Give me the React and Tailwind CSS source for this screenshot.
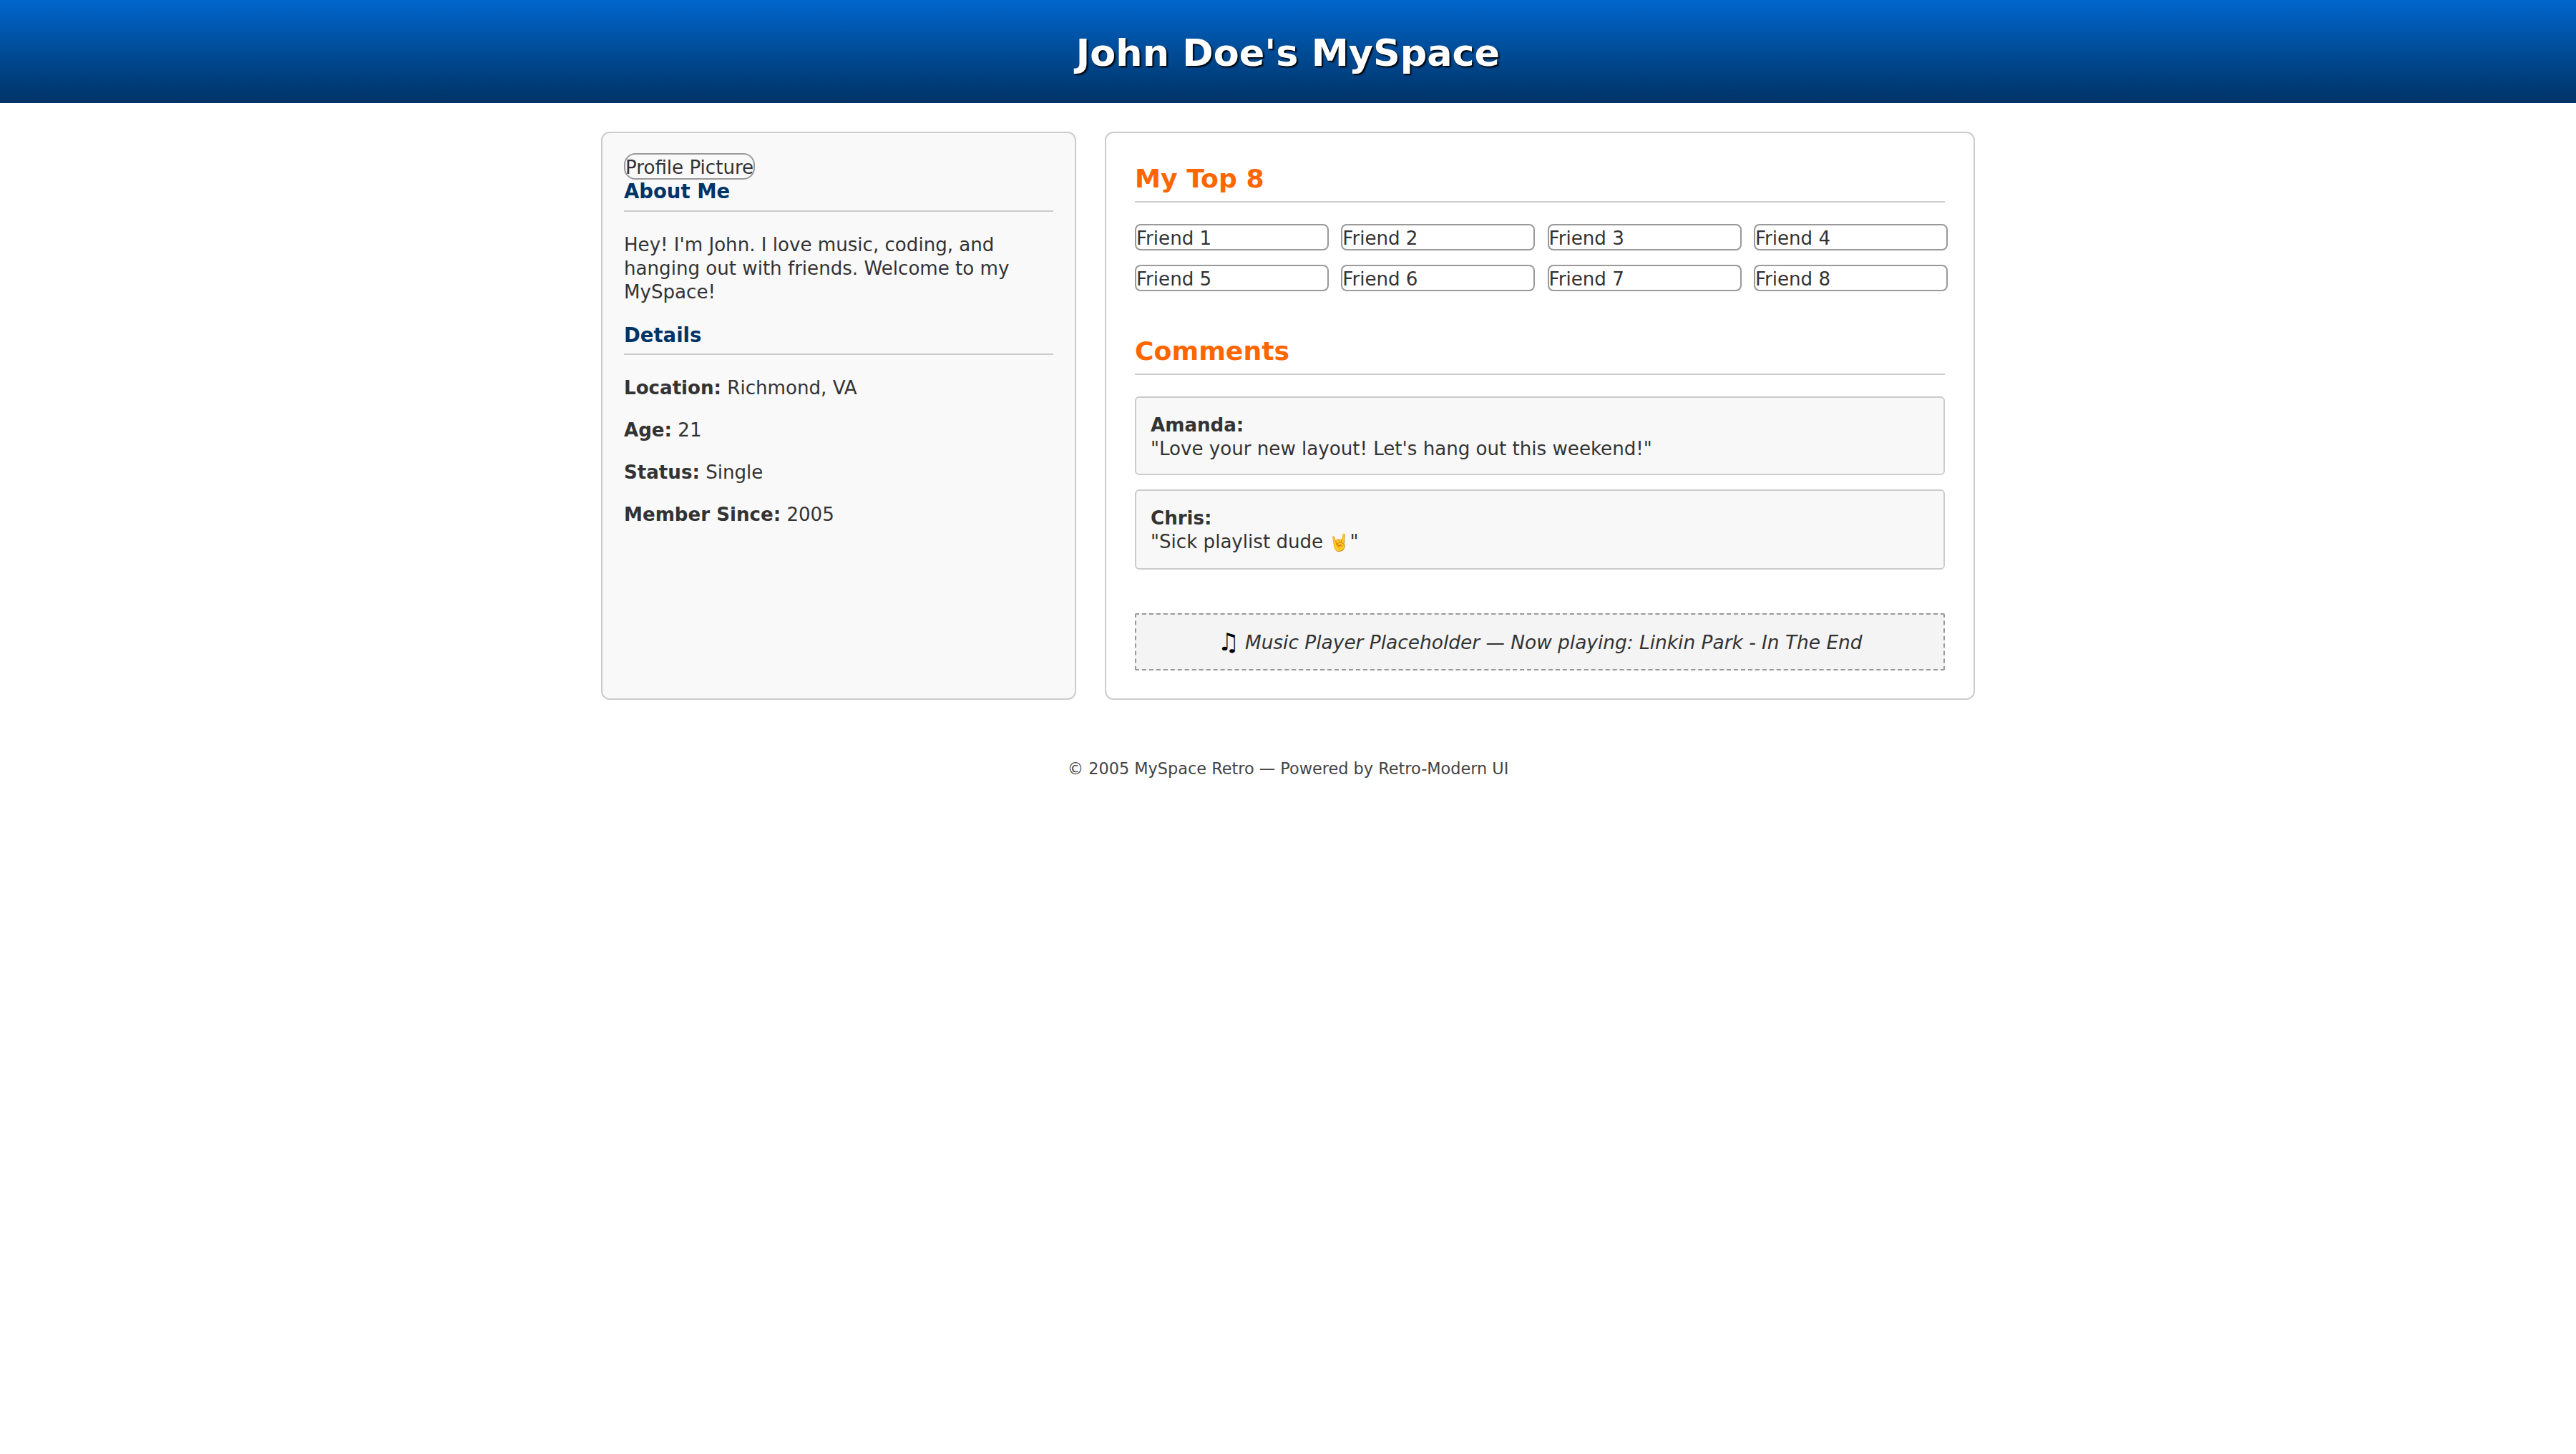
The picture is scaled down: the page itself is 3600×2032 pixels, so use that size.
const friends = ['Friend 1', 'Friend 2', 'Friend 3', 'Friend 4', 'Friend 5', 'Friend 6', 'Friend 7', 'Friend 8'];

const details = [
  ['Location:', 'Richmond, VA'],
  ['Age:', '21'],
  ['Status:', 'Single'],
  ['Member Since:', '2005'],
];

const App = () => {
  return (
    <div className="min-h-screen bg-white text-[26.1px] leading-[33px] text-[#333333] font-['DejaVu_Sans',sans-serif]">
      <header className="h-[144px] pt-[2px] bg-gradient-to-b from-[#0066cc] to-[#003366] flex items-center justify-center">
        <h1 className="text-[52.4px] font-bold text-white [text-shadow:2px_2px_2px_#000]">John Doe's MySpace</h1>
      </header>

      <main className="w-[1920px] mx-auto mt-[40px] flex gap-[40px]">
        <aside className="w-[664px] h-[794px] shrink-0 bg-[#f9f9f9] border-2 border-[#cccccc] rounded-[12px] px-[30px] pt-[28px]">
          <button className="block h-[37px] pt-[2px] border-2 border-[#999999] rounded-[16px] text-[#333333]">Profile Picture</button>
          <h2 className="text-[27.5px] font-bold text-[#003366] border-b-2 border-[#cccccc] pb-[10px] leading-[33px]">About Me</h2>
          <p className="mt-[30px]">Hey! I'm John. I love music, coding, and hanging out with friends. Welcome to my MySpace!</p>
          <h2 className="mt-[27px] text-[27.5px] font-bold text-[#003366] border-b-2 border-[#cccccc] pb-[9px] leading-[33px]">Details</h2>
          <div className="mt-[30px] flex flex-col gap-[26px]">
            {details.map(([label, value]) => (
              <p key={label}><b>{label}</b> {value}</p>
            ))}
          </div>
        </aside>

        <section className="w-[1216px] h-[794px] shrink-0 bg-white border-2 border-[#cccccc] rounded-[12px] px-[40px] pt-[42px]">
          <h2 className="text-[36.2px] leading-[43px] font-bold text-[#ff6600] border-b-2 border-[#cccccc] pb-[10px]">My Top 8</h2>
          <div className="mt-[30px] grid grid-cols-[repeat(4,271px)] gap-x-[17.3px] gap-y-[20px]">
            {friends.map((name) => (
              <button key={name} className="h-[37px] pt-[2px] text-left border-2 border-[#999999] rounded-[8px] text-[#333333]">{name}</button>
            ))}
          </div>
          <h2 className="mt-[62px] text-[36.2px] leading-[43px] font-bold text-[#ff6600] border-b-2 border-[#cccccc] pb-[10px]">Comments</h2>
          <div className="mt-[30px] bg-[#f8f8f8] border-2 border-[#cccccc] rounded-[6px] px-[20px] pt-[22px] pb-[18px]">
            <b>Amanda:</b><br />"Love your new layout! Let's hang out this weekend!"
          </div>
          <div className="mt-[20px] h-[112px] bg-[#f8f8f8] border-2 border-[#cccccc] rounded-[6px] px-[20px] pt-[22px]">
            <b>Chris:</b><br />"Sick playlist dude <span className="text-[23px]">🤘</span>"
          </div>
          <div className="mt-[61px] h-[80px] flex items-center justify-center bg-[#f4f4f4] border-2 border-dashed border-[#999999] rounded-[2px] italic text-[26.4px]">
            <span className="text-[34px] leading-none mr-[8px] text-black">♫</span>Music Player Placeholder — Now playing: Linkin Park - In The End
          </div>
        </section>
      </main>

      <footer className="mt-[80px] text-center text-[22.4px] text-[#444444]">© 2005 MySpace Retro — Powered by Retro-Modern UI</footer>
    </div>
  );
};

export default App;
